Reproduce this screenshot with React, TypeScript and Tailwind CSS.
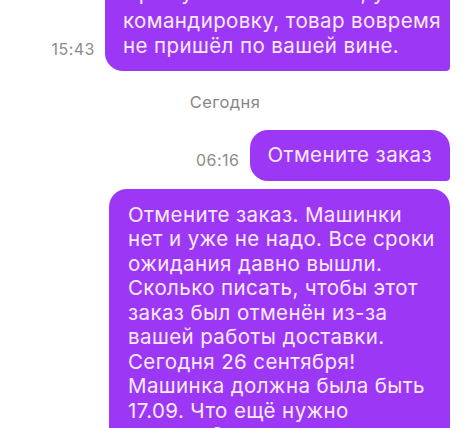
export default function App() {
  const font = { fontFamily: 'Inter, "Open Sans", sans-serif' };
  return (
    <div className="h-[428px] w-full overflow-hidden bg-white" style={font}>
      <div className="flex flex-col pr-[11px]">
        {/* message cut off at top */}
        <div className="-mt-[36px] flex items-end justify-end gap-[10px]">
          <span className="mb-[14px] text-[16px] leading-none tracking-[0.5px] text-[#8c8c8c]">15:43</span>
          <div className="w-[345px] rounded-[18px] rounded-br-[4px] bg-[#9c37f6] px-[18px] py-[13px] text-[20.5px] leading-[24.5px] tracking-[0.4px] text-[#fbeaff] whitespace-nowrap">
            <div className="leading-[32px]">Прошу отменить заказ, уехала в</div>
            командировку, товар вовремя
            <br />
            не пришёл по вашей вине.
          </div>
        </div>

        <div className="mt-[22px] text-center text-[16.5px] leading-[18px] tracking-[0.4px] text-[#878787]">
          Сегодня
        </div>

        <div className="mt-[19px] flex items-end justify-end gap-[10px]">
          <span className="mb-[13px] text-[16px] leading-none tracking-[0.5px] text-[#8c8c8c]">06:16</span>
          <div className="rounded-[18px] rounded-br-[4px] bg-[#9c37f6] px-[18px] py-[13px] text-[20.5px] leading-[24.5px] tracking-[0.4px] text-[#fbeaff] whitespace-nowrap">
            Отмените заказ
          </div>
        </div>

        <div className="mt-[8px] flex justify-end">
          <div className="w-[341px] rounded-[18px] rounded-br-[4px] bg-[#9c37f6] px-[19px] py-[14px] text-[20.5px] leading-[24.5px] tracking-[0.4px] text-[#fbeaff] whitespace-nowrap">
            Отмените заказ. Машинки
            <br />
            нет и уже не надо. Все сроки
            <br />
            ожидания давно вышли.
            <br />
            Сколько писать, чтобы этот
            <br />
            заказ был отменён из-за
            <br />
            вашей работы доставки.
            <br />
            Сегодня 26 сентября!
            <br />
            Машинка должна была быть
            <br />
            17.09. Что ещё нужно
            <br />
            сделать?
          </div>
        </div>
      </div>
    </div>
  );
}
